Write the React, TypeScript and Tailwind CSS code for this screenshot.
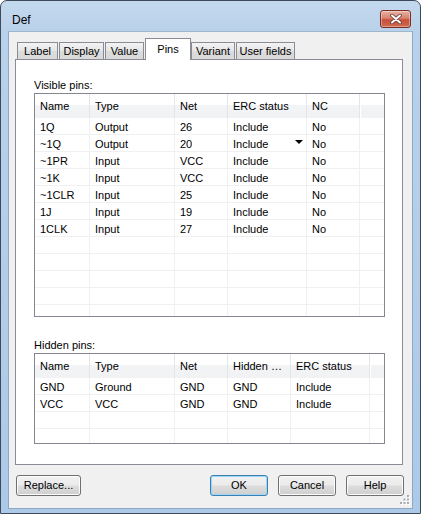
import React from 'react';

const visibleCols = [55, 85, 53, 79, 53];
const hiddenCols = [55, 85, 53, 63, 79];

const visibleRows = [
  ['1Q', 'Output', '26', 'Include', 'No'],
  ['~1Q', 'Output', '20', 'Include', 'No'],
  ['~1PR', 'Input', 'VCC', 'Include', 'No'],
  ['~1K', 'Input', 'VCC', 'Include', 'No'],
  ['~1CLR', 'Input', '25', 'Include', 'No'],
  ['1J', 'Input', '19', 'Include', 'No'],
  ['1CLK', 'Input', '27', 'Include', 'No'],
];

const hiddenRows = [
  ['GND', 'Ground', 'GND', 'GND', 'Include'],
  ['VCC', 'VCC', 'GND', 'GND', 'Include'],
];

function PinTable({
  cols,
  headers,
  rows,
  totalRows,
  height,
  dropdownAt,
}: {
  cols: number[];
  headers: string[];
  rows: string[][];
  totalRows: number;
  height: string;
  dropdownAt?: [number, number];
}) {
  const filled = [...rows];
  while (filled.length < totalRows) filled.push(cols.map(() => ''));

  return (
    <div className={`${height} border border-[#828790] bg-white overflow-hidden`}>
      {/* header */}
      <div className="flex h-[24px] bg-[linear-gradient(to_bottom,#ffffff_0%,#ffffff_45%,#f3f4f6_45%,#f1f2f4_100%)]">
        {headers.map((h, i) => (
          <div
            key={i}
            className="flex items-center pl-[5px] border-r border-[#e3e5e8] shrink-0 whitespace-nowrap"
            style={{ width: cols[i] }}
          >
            {h}
          </div>
        ))}
        <div className="flex-1 border-l border-white" />
      </div>
      {/* body */}
      {filled.map((r, ri) => (
        <div key={ri} className="flex h-[17px] border-b border-[#f0f0f0]">
          {r.map((c, ci) => (
            <div
              key={ci}
              className="relative flex items-center pl-[5px] pt-px border-r border-[#f0f0f0] shrink-0 whitespace-nowrap leading-[16px]"
              style={{ width: cols[ci] }}
            >
              {c}
              {dropdownAt && dropdownAt[0] === ri && dropdownAt[1] === ci && (
                <svg className="absolute right-[3px] top-[5px]" width="8" height="4" viewBox="0 0 8 4">
                  <path d="M0 0 H8 L4 4 Z" fill="#000" />
                </svg>
              )}
            </div>
          ))}
          <div className="flex-1" />
        </div>
      ))}
    </div>
  );
}

function Tab({ label, width, active }: { label: string; width: string; active?: boolean }) {
  if (active) {
    return (
      <div
        className={`${width} h-[22px] -mb-px relative z-10 bg-white border border-b-0 border-[#898c95] flex justify-center pt-[2px]`}
      >
        {label}
      </div>
    );
  }
  return (
    <div
      className={`${width} h-[17px] border border-b-0 border-[#898c95] bg-[linear-gradient(to_bottom,#f3f3f3,#e5e5e5_50%,#dcdcdc_50%,#d9d9d9)] flex justify-center items-center pt-[1px]`}
    >
      {label}
    </div>
  );
}

function Button({ label, width, primary }: { label: string; width: string; primary?: boolean }) {
  return (
    <div
      className={`${width} h-[21px] rounded-[3px] border flex items-center justify-center bg-[linear-gradient(to_bottom,#f2f2f2,#ebebeb_48%,#dddddd_52%,#cfcfcf)] ${
        primary
          ? 'border-[#3c7fb1] shadow-[inset_0_0_0_1px_#9ad5f5]'
          : 'border-[#707070] shadow-[inset_0_0_0_1px_#fcfcfc]'
      }`}
    >
      {label}
    </div>
  );
}

export default function App() {
  return (
    <div className="w-[421px] h-[514px] bg-white text-[11px] text-black font-['Liberation_Sans',Arial,sans-serif]">
      <div className="relative h-full flex flex-col rounded-t-[7px] border border-[#3d4a59] bg-[linear-gradient(to_bottom,#c4d9ee,#b9d1ea_30px,#adc9e8)]">
        {/* title bar */}
        <div className="h-[30px] flex items-start justify-between pl-[11px] pr-[9px] shrink-0">
          <span className="text-[12px] mt-[12px] leading-[14px]">Def</span>
          <div className="mt-[9px] w-[31px] h-[18px] rounded-[3px] border border-[#7b2e24] bg-[linear-gradient(to_bottom,#eab2a4,#d9826f_45%,#c8503a_55%,#d06a4f)] shadow-[inset_0_0_0_1px_rgba(255,255,255,0.35)] flex items-center justify-center">
            <svg width="12" height="10" viewBox="0 0 12 10">
              <path d="M2 1.5 L10 8.5 M10 1.5 L2 8.5" stroke="#5a3a36" strokeWidth="3.6" strokeLinecap="round" />
              <path d="M2 1.5 L10 8.5 M10 1.5 L2 8.5" stroke="#ffffff" strokeWidth="2" strokeLinecap="round" />
            </svg>
          </div>
        </div>

        {/* client area */}
        <div className="relative mx-[7px] mb-[4px] flex-1 bg-[#f0f0f0] border border-[#8ea7c4] border-t-[#9fb6d0] pt-[6px] pl-[6px] pr-[9px]">
          {/* tabs */}
          <div className="flex items-end h-[21px] pl-[2px] gap-px">
            <Tab label="Label" width="w-[41px]" />
            <Tab label="Display" width="w-[45px]" />
            <Tab label="Value" width="w-[39px]" />
            <Tab label="Pins" width="w-[46px]" active />
            <div className="-ml-px">
              <Tab label="Variant" width="w-[44px]" />
            </div>
            <Tab label="User fields" width="w-[59px]" />
          </div>

          {/* tab page */}
          <div className="h-[406px] border border-[#898c95] bg-white pt-[17px] pl-[18px] pr-[17px]">
            <div className="h-[16px] leading-[16px]">Visible pins:</div>
            <PinTable
              cols={visibleCols}
              headers={['Name', 'Type', 'Net', 'ERC status', 'NC']}
              rows={visibleRows}
              totalRows={12}
              height="h-[224px]"
              dropdownAt={[1, 3]}
            />
            <div className="h-[16px] leading-[16px] mt-[20px]">Hidden pins:</div>
            <PinTable
              cols={hiddenCols}
              headers={['Name', 'Type', 'Net', 'Hidden …', 'ERC status']}
              rows={hiddenRows}
              totalRows={4}
              height="h-[91px]"
            />
          </div>

          {/* buttons */}
          <div className="flex mt-[10px] pl-[1px] -mr-px">
            <Button label="Replace..." width="w-[65px]" />
            <div className="flex-1" />
            <div className="flex gap-[10px]">
              <Button label="OK" width="w-[58px]" primary />
              <Button label="Cancel" width="w-[58px]" />
              <Button label="Help" width="w-[58px]" />
            </div>
          </div>

          {/* size grip */}
          <svg className="absolute right-[1px] bottom-[2px]" width="11" height="11" viewBox="0 0 11 11">
            {[
              [7, 0],
              [3.5, 3.5],
              [7, 3.5],
              [0, 7],
              [3.5, 7],
              [7, 7],
            ].map(([x, y], i) => (
              <g key={i}>
                <rect x={x + 1} y={y + 1} width="2" height="2" fill="#ffffff" />
                <rect x={x} y={y} width="2" height="2" fill="#a8adb3" />
              </g>
            ))}
          </svg>
        </div>
      </div>
    </div>
  );
}
